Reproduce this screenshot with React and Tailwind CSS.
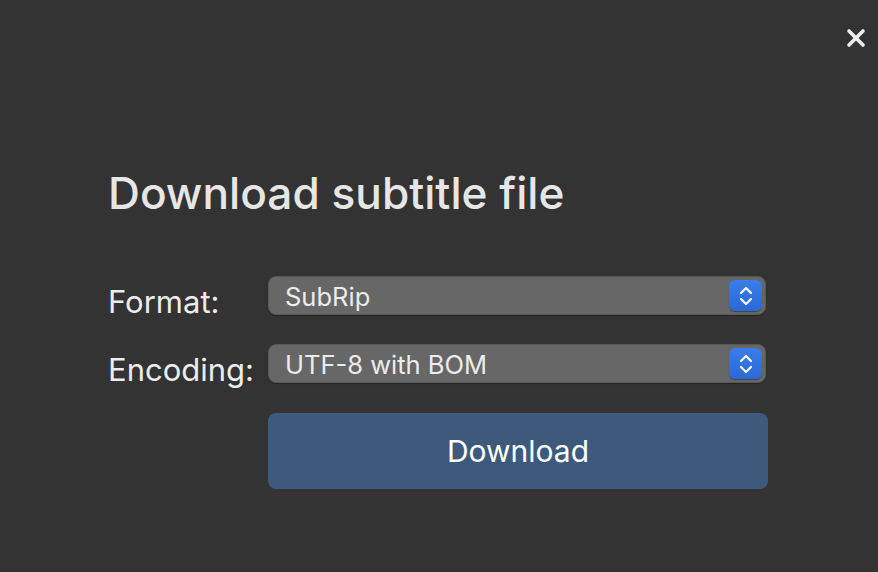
import React from 'react';

const font = { fontFamily: 'Inter, "Noto Sans", sans-serif' };

// Stepper (up/down chevrons) like the macOS popup button
function Stepper() {
  return (
    <div className="flex h-[31px] w-[33px] items-center justify-center rounded-[6px] bg-gradient-to-b from-[#3a7ee8] to-[#2a68d6] shadow-[0_1px_1px_rgba(0,0,0,0.35)]">
      <svg width="16" height="22" viewBox="0 0 16 22" fill="none" stroke="#f2f6ff" strokeWidth="2.2" strokeLinecap="round" strokeLinejoin="round">
        <path d="M3 8 L8 3 L13 8" />
        <path d="M3 14 L8 19 L13 14" />
      </svg>
    </div>
  );
}

function SelectBox({ value }) {
  return (
    <div className="flex h-[39px] w-[498px] items-center justify-between rounded-[8px] border border-[#575757] bg-[#676767] pl-[16px] pr-[3px] shadow-[0_1px_1px_rgba(0,0,0,0.25)]">
      <span className="pt-[3px] text-[25.5px] leading-none text-[#ececec]">{value}</span>
      <Stepper />
    </div>
  );
}

export default function App() {
  return (
    <div className="relative h-[572px] w-[878px] overflow-hidden bg-[#333333]" style={font}>
      {/* tombol tutup */}
      <button className="absolute right-[10px] top-[26px] p-[2px]">
        <svg width="20" height="20" viewBox="0 0 20 20" stroke="#ececec" strokeWidth="3.6" strokeLinecap="round">
          <path d="M3 3 L17 17" />
          <path d="M17 3 L3 17" />
        </svg>
      </button>

      <div className="flex flex-col pl-[108px] pt-[165px]">
        <h1 className="text-[44.2px] font-medium leading-[56px] text-[#e6e6e6]">
          Download subtitle file
        </h1>

        <div className="mt-[55px] flex flex-col gap-[29px]">
          <div className="flex h-[39px] items-center">
            <label className="w-[160px] pt-[11px] text-[31px] leading-none text-[#ececec]">Format:</label>
            <SelectBox value="SubRip" />
          </div>
          <div className="flex h-[39px] items-center">
            <label className="w-[160px] pt-[11px] text-[31px] leading-none text-[#ececec]">Encoding:</label>
            <SelectBox value="UTF-8 with BOM" />
          </div>
        </div>

        <div className="ml-[160px] mt-[30px]">
          <button className="flex h-[76px] w-[500px] items-center justify-center rounded-[8px] bg-[#3d5a7d] text-[30px] text-white">
            Download
          </button>
        </div>
      </div>
    </div>
  );
}
